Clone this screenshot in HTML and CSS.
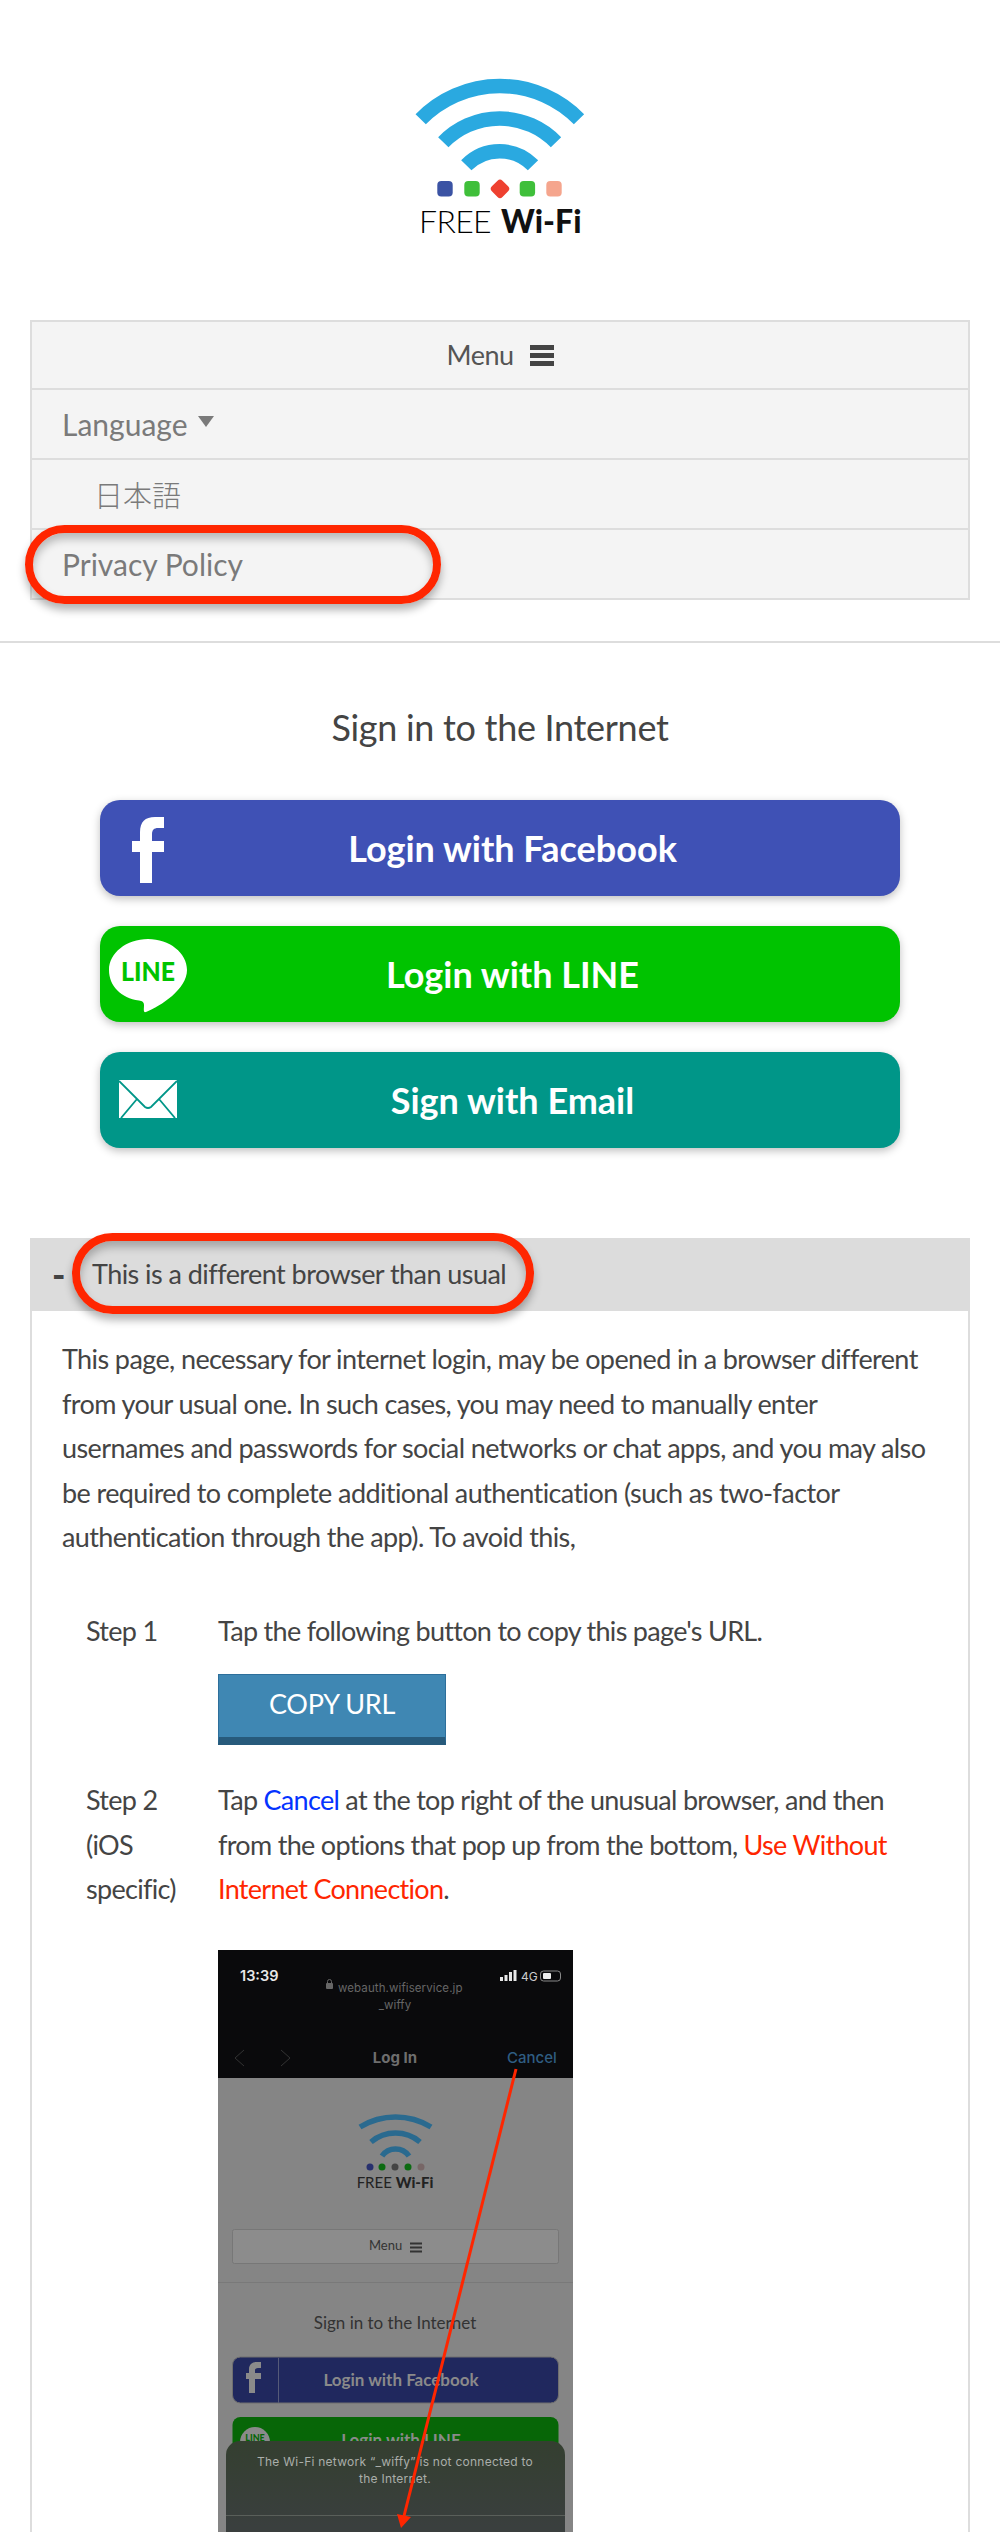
FILE: index.html
```html
<!DOCTYPE html>
<html lang="en">
<head>
    <meta charset="UTF-8">
    <meta name="viewport" content="width=device-width, initial-scale=1.0">
    <title>FREE Wi-Fi</title>
    <link rel="stylesheet" href="styles.css">
</head>
<body>
    <header class="logo">
        <svg width="240" height="190" viewBox="0 0 240 190">
            <g fill="none" stroke="#2aa9e0" stroke-width="14.4">
                <path d="M40.7 59.3A110.8 110.8 0 0 1 199 59.3"/>
                <path d="M63.3 82.3A78.5 78.5 0 0 1 176 82.3"/>
                <path d="M86.3 105.3A46.6 46.6 0 0 1 153 105.3"/>
            </g>
            <rect x="57.3" y="121" width="15.4" height="15.6" rx="4" fill="#3b53a4"/>
            <rect x="84.3" y="121" width="15.4" height="15.6" rx="4" fill="#3fbf3a"/>
            <rect x="112.5" y="121.300" width="15" height="15" rx="3.500" fill="#ee4130" transform="rotate(45 120 128.800)"/>
            <rect x="139.7" y="121" width="15.4" height="15.6" rx="4" fill="#3fbf3a"/>
            <rect x="166.3" y="121" width="15.4" height="15.6" rx="4" fill="#f5a58d"/>
            <text x="39" y="173.3" class="logo-free" textLength="72">FREE</text>
            <text x="121" y="173.3" class="logo-wifi" textLength="80">Wi-Fi</text>
        </svg>
    </header>

    <nav class="menu">
        <div class="menu-row menu-toggle">
            <span>Menu</span>
            <span class="burger"><i></i><i></i><i></i></span>
        </div>
        <div class="menu-row menu-lang">Language<span class="caret"></span></div>
        <div class="menu-row menu-sub">日本語</div>
        <div class="menu-row menu-last">Privacy Policy</div>
        <div class="oval oval-privacy"></div>
    </nav>

    <hr class="rule">

    <h1 class="title">Sign in to the Internet</h1>

    <div class="logins">
        <a class="login login-fb">
            <svg class="login-icon icon-fb" width="32" height="66" viewBox="0 0 32 66">
                <path d="M8 66V35H0V24H8V15C8 5 13 0 23 0H32V11H26C22 11 20 13 20 17V24H32V35H20V66Z" fill="#fff"/>
            </svg>
            Login with Facebook
        </a>
        <a class="login login-line">
            <svg class="login-icon icon-line" width="78" height="74" viewBox="0 0 78 74">
                <path d="M39 0C60.500 0 78 14 78 31C78 50 52 67 37 73C34 74 35 70 35 66C35 63 33 62 30 61.500C12 59 0 47 0 31C0 14 17.500 0 39 0Z" fill="#fff"/>
                <text x="12" y="42" class="line-word" textLength="54" lengthAdjust="spacingAndGlyphs">LINE</text>
            </svg>
            Login with LINE
        </a>
        <a class="login login-mail">
            <svg class="login-icon icon-mail" width="58" height="38" viewBox="0 0 58 38">
                <rect width="58" height="38" fill="#fff"/>
                <path d="M0 1L26 27Q29 29 32 27L58 1M2 38L18 19M56 38L40 19" fill="none" stroke="#009688" stroke-width="1.800"/>
            </svg>
            Sign with Email
        </a>
    </div>

    <section class="notice">
        <div class="notice-head">
            <span class="notice-dash">-</span>
            <span class="notice-title">This is a different browser than usual</span>
            <div class="oval oval-notice"></div>
        </div>
        <div class="notice-body">
            <p class="intro">This page, necessary for internet login, may be opened in a browser different from your usual one. In such cases, you may need to manually enter usernames and passwords for social networks or chat apps, and you may also be required to complete additional authentication (such as two-factor authentication through the app). To avoid this,</p>

            <div class="step">
                <div class="step-name">Step 1</div>
                <div>
                    <p>Tap the following button to copy this page's URL.</p>
                    <button class="copy-btn" type="button">COPY URL</button>
                </div>
            </div>

            <div class="step step-two">
                <div class="step-name">Step 2 (iOS specific)</div>
                <div>
                    <p>Tap <span class="blue">Cancel</span> at the top right of the unusual browser, and then from the options that pop up from the bottom, <span class="red">Use Without Internet Connection</span>.</p>
                    <svg class="phone" width="355" height="640" viewBox="0 0 355 640">
                        <defs>
                            <linearGradient id="sheetFill" x1="0" y1="0" x2="0" y2="1">
                                <stop offset="0" stop-color="#343f30"/>
                                <stop offset="0.5" stop-color="#3a3f3e"/>
                            </linearGradient>
                        </defs>
                        <rect width="355" height="640" fill="#858585"/>
                        <rect width="355" height="128" fill="#0a0a0c"/>
                        <text x="22" y="31" class="ph-time">13:39</text>
                        <g fill="#e8e8e8">
                            <rect x="282" y="27" width="3" height="4"/>
                            <rect x="286.500" y="25" width="3" height="6"/>
                            <rect x="291" y="22" width="3" height="9"/>
                            <rect x="295.500" y="20" width="3" height="11"/>
                        </g>
                        <text x="303" y="31" class="ph-net">4G</text>
                        <rect x="322.500" y="21" width="20" height="10" rx="3" fill="none" stroke="#888"/>
                        <rect x="325" y="23" width="8" height="6" rx="1" fill="#eee"/>
                        <rect x="108" y="33" width="7" height="6" rx="1" fill="#666"/>
                        <path d="M109.500 33V31.500A2 2 0 0 1 113.500 31.500V33" fill="none" stroke="#666"/>
                        <text x="120" y="42" class="ph-url">webauth.wifiservice.jp</text>
                        <text x="177" y="59" class="ph-url ph-mid">_wiffy</text>
                        <path d="M26 100L17 108L26 116M63 100L72 108L63 116" fill="none" stroke="#333"/>
                        <text x="177" y="113" class="ph-login ph-mid">Log In</text>
                        <text x="289" y="113" class="ph-cancel">Cancel</text>

                        <g fill="none" stroke="#2a6a8f" stroke-width="5.500">
                            <path d="M142 177A68 68 0 0 1 213 177"/>
                            <path d="M153 192A38 38 0 0 1 202 192"/>
                            <path d="M164 206A16.500 16.500 0 0 1 191 206"/>
                        </g>
                        <circle cx="152" cy="217" r="3.500" fill="#27306e"/>
                        <circle cx="164" cy="217" r="3.500" fill="#0c6b12"/>
                        <circle cx="177" cy="217" r="3.500" fill="#444"/>
                        <circle cx="190" cy="217" r="3.500" fill="#0c6b12"/>
                        <circle cx="203" cy="217" r="3.500" fill="#766"/>
                        <text x="177" y="238" class="ph-free ph-mid">FREE <tspan class="ph-bold">Wi-Fi</tspan></text>

                        <rect x="14.500" y="279.500" width="326" height="34" rx="2" fill="#8c8c8c" stroke="#777"/>
                        <text x="151" y="300" class="ph-menu">Menu</text>
                        <path d="M192 293.500H204M192 297.500H204M192 301.500H204" stroke="#333" stroke-width="2"/>
                        <rect y="332" width="355" height="1" fill="#797979"/>
                        <text x="177" y="379" class="ph-sign ph-mid">Sign in to the Internet</text>

                        <rect x="14.500" y="407" width="326" height="46" rx="8" fill="#20285e" stroke="#6f6f6f"/>
                        <rect x="60" y="408" width="1" height="45" fill="#555a78"/>
                        <path d="M31 443V429H28V423H31V419C31 415 34 412 38 412H43V418H40C38 418 37 419 37 420V423H43V429H37V443Z" fill="#8a8a8a"/>
                        <text x="183" y="436" class="ph-btn ph-mid">Login with Facebook</text>

                        <rect x="14.500" y="467" width="326" height="46" rx="8" fill="#076607"/>
                        <circle cx="37" cy="492" r="15" fill="#8a8a8a"/>
                        <text x="37" y="491" class="ph-line ph-mid">LINE</text>
                        <text x="183" y="496" class="ph-btn ph-mid">Login with LINE</text>

                        <rect x="8" y="491" width="339" height="170" rx="14" fill="url(#sheetFill)"/>
                        <text x="177" y="516" class="ph-sheet ph-mid">The Wi-Fi network “_wiffy” is not connected to</text>
                        <text x="177" y="533" class="ph-sheet ph-mid">the Internet.</text>
                        <rect x="8" y="565" width="339" height="1" fill="#5a5f5a"/>

                        <path d="M298 119L186 566" stroke="#ff2600" stroke-width="3"/>
                        <path d="M179 564L193 567L183 578Z" fill="#ff2600"/>
                    </svg>
                </div>
            </div>
        </div>
    </section>
</body>
</html>
```

FILE: styles.css
```css
/* General Styles */
html, body {
    height: 100vh;
    overflow: hidden;
}

body {
    margin: 0;
    background: #fff;
    color: #444;
    font-family: 'Lato', sans-serif;
    font-size: 27px;
    line-height: 44.5px;
    letter-spacing: -0.6px;
}

p {
    margin: 0;
}

/* Logo */
.logo {
    display: flex;
    justify-content: center;
    height: 260px;
    padding-top: 60px;
}

.logo-free {
    font-size: 32px;
    font-weight: 300;
    fill: #000;
}

.logo-wifi {
    font-size: 32px;
    font-weight: 900;
    fill: #111;
}

/* Menu */
.menu {
    position: relative;
    margin: 0 30px;
    background: #f4f4f4;
    border: 2px solid #ddd;
    color: #7a7a7a;
    font-size: 30px;
    letter-spacing: 0;
}

.menu-row {
    display: flex;
    align-items: center;
    height: 68px;
    padding-left: 30px;
    border-bottom: 2px solid #ddd;
}

.menu-last {
    border-bottom: 0;
}

.menu-toggle {
    justify-content: center;
    gap: 16px;
    height: 66px;
    padding-left: 0;
    color: #555;
    font-size: 27px;
    letter-spacing: -0.5px;
}

.burger {
    display: flex;
    flex-direction: column;
    gap: 3px;
    width: 24px;
}

.burger i {
    height: 5px;
    background: #444;
}

.caret {
    width: 0;
    height: 0;
    margin: -6px 0 0 10px;
    border-left: 8px solid transparent;
    border-right: 8px solid transparent;
    border-top: 11px solid #7a7a7a;
}

.menu-sub {
    padding-left: 62px;
    font-family: 'Noto Sans CJK JP', sans-serif;
    font-size: 29px;
    font-weight: 300;
}

.oval {
    position: absolute;
    box-sizing: border-box;
    border: 8px solid #ff2600;
    border-radius: 42px;
    box-shadow: 0 6px 8px rgba(0, 0, 0, 0.3), inset 0 6px 8px rgba(0, 0, 0, 0.25);
}

.oval-privacy {
    left: -7px;
    top: 203px;
    width: 416px;
    height: 79px;
}

.oval-notice {
    left: 42px;
    top: -5px;
    width: 462px;
    height: 81px;
}

.rule {
    height: 2px;
    margin: 41px 0 0;
    border: 0;
    background: #ddd;
}

.title {
    margin: 62px 0 0;
    color: #444;
    font-size: 36px;
    font-weight: 400;
    line-height: 44px;
    letter-spacing: -0.3px;
    text-align: center;
}

/* Login buttons */
.logins {
    display: flex;
    flex-direction: column;
    gap: 30px;
    margin: 51px 100px 0;
}

.login {
    position: relative;
    display: flex;
    align-items: center;
    justify-content: center;
    height: 96px;
    padding-left: 25px;
    border-radius: 20px;
    box-shadow: 0 3px 8px rgba(0, 0, 0, 0.25);
    color: #fff;
    font-size: 36px;
    font-weight: 700;
    letter-spacing: 0;
}

.login-fb { background: #3f51b5; }
.login-line { background: #00c300; }
.login-mail { background: #009688; }

.login-icon {
    position: absolute;
}

.icon-fb { left: 32px; top: 17px; }
.icon-line { left: 9px; top: 13px; }
.icon-mail { left: 19px; top: 28px; }

.line-word {
    fill: #00c300;
    font-size: 27px;
    font-weight: 900;
}

/* Notice */
.notice {
    margin: 90px 30px 0;
}

.notice-head {
    position: relative;
    display: flex;
    align-items: center;
    height: 73px;
    padding-left: 22px;
    background: #dcdcdc;
}

.notice-dash {
    width: 40px;
    font-size: 36px;
    font-weight: 900;
}

.notice-title {
    letter-spacing: -0.55px;
}

.notice-body {
    padding: 26px 30px 0;
    border: 2px solid #ddd;
    border-top: 0;
}

.intro {
    margin-bottom: 49px;
}

.step {
    display: grid;
    grid-template-columns: 132px 1fr;
    padding-left: 24px;
    letter-spacing: -0.7px;
}

.step-name {
    width: 100px;
}

.step-two {
    margin-top: 33px;
}

.copy-btn {
    display: block;
    box-sizing: border-box;
    width: 228px;
    height: 71px;
    margin-top: 21px;
    padding: 0 0 6px;
    background: #3f87b3;
    border: 1px solid #2d6f9b;
    border-bottom: 8px solid #275a7b;
    color: #fff;
    font-family: inherit;
    font-size: 27px;
    letter-spacing: -0.3px;
}

.blue { color: #0433ff; }
.red { color: #ff2600; }

.phone {
    display: block;
    margin-top: 38px;
}

/* text inside the phone picture */
.ph-mid { text-anchor: middle; }
.ph-time { fill: #e8e8e8; font: 600 14.500px 'Inter', sans-serif; letter-spacing: 0; }
.ph-net { fill: #ccc; font: 400 12px 'Inter', sans-serif; letter-spacing: 0; }
.ph-url { fill: #666; font: 400 11.500px 'Inter', sans-serif; letter-spacing: 0.100px; }
.ph-login { fill: #6e6e6e; font: 700 15px 'Inter', sans-serif; letter-spacing: 0; }
.ph-cancel { fill: #2f5d82; font: 500 15px 'Inter', sans-serif; letter-spacing: 0; }
.ph-free { fill: #222; font: 400 15px 'Lato', sans-serif; letter-spacing: 0; }
.ph-bold { font-weight: 900; }
.ph-menu { fill: #333; font: 400 13px 'Lato', sans-serif; letter-spacing: 0; }
.ph-sign { fill: #333; font: 400 17px 'Lato', sans-serif; letter-spacing: 0; }
.ph-btn { fill: #8a8a8a; font: 700 17px 'Lato', sans-serif; letter-spacing: 0; }
.ph-line { fill: #076607; font: 900 9px 'Lato', sans-serif; letter-spacing: 0; }
.ph-sheet { fill: #aaaeaa; font: 400 12px 'Inter', sans-serif; letter-spacing: 0.250px; }
```
